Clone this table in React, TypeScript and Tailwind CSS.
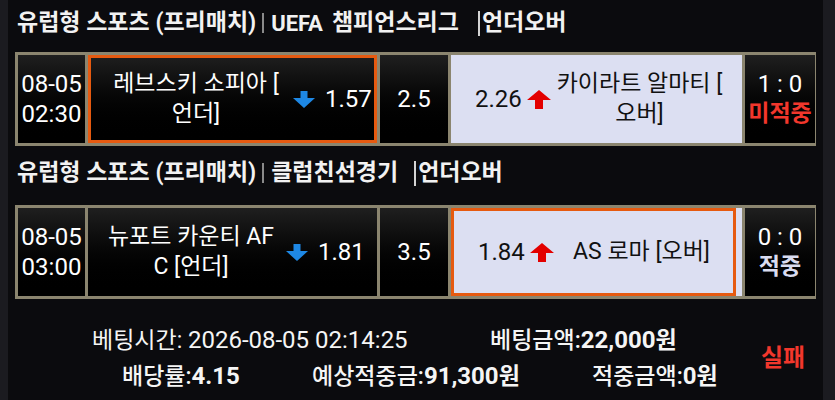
import clsx from 'clsx';

type Match = {
  date: string;
  time: string;
  home: [string, string?];
  homeOdds: string;
  line: string;
  away: [string, string?];
  awayOdds: string;
  score: string;
  result: string;
  resultColor: string;
  pick: 'home' | 'away';
};

const matches: { league: string; match: Match }[] = [
  {
    league: '챔피언스리그',
    match: {
      date: '08-05',
      time: '02:30',
      home: ['레브스키 소피아 [', '언더]'],
      homeOdds: '1.57',
      line: '2.5',
      away: ['카이라트 알마티 [', '오버]'],
      awayOdds: '2.26',
      score: '1 : 0',
      result: '미적중',
      resultColor: 'text-[#f2372c]',
      pick: 'home',
    },
  },
  {
    league: '클럽친선경기',
    match: {
      date: '08-05',
      time: '03:00',
      home: ['뉴포트 카운티 AF', 'C [언더]'],
      homeOdds: '1.81',
      line: '3.5',
      away: ['AS 로마 [오버]'],
      awayOdds: '1.84',
      score: '0 : 0',
      result: '적중',
      resultColor: 'text-[#d9dcf0]',
      pick: 'away',
    },
  },
];

function DownArrow() {
  return (
    <svg width="22" height="17" viewBox="0 0 22 17" className="shrink-0">
      <path d="M7.5 0h7v7H22L11 17 0 7h7.5z" fill="#1e88e5" />
    </svg>
  );
}

function UpArrow() {
  return (
    <svg width="24" height="19" viewBox="0 0 24 19" className="shrink-0">
      <path d="M12 0l12 10h-8v9H8v-9H0z" fill="#e30000" />
    </svg>
  );
}

function Title({ league, uefa }: { league: string; uefa?: boolean }) {
  return (
    <div className="flex h-[28px] items-center pl-[9px] text-[23px] font-bold text-[#f2f2f2]">
      <span>유럽형 스포츠 (프리매치)</span>
      <span className="mr-[7px] ml-[6px] h-[20px] w-[2px] bg-[#8a8a8a]" />
      {uefa && <span className="mr-[9px] text-[22px]">UEFA</span>}
      <span>{league}</span>
      <span className={clsx('mr-[2px] h-[25px] w-[2px] bg-[#d4d4d4]', uefa ? 'ml-[19px]' : 'ml-[16px]')} />
      <span>언더오버</span>
    </div>
  );
}

const dark = 'bg-linear-to-b from-[#1f1f1f] to-black text-white';

function MatchTable({ m }: { m: Match }) {
  const homePicked = m.pick === 'home';
  const awayPicked = m.pick === 'away';
  return (
    <div className="mx-[7px] grid grid-cols-[67px_289px_68px_291px_70px] gap-[3px] bg-[#8b856f] p-[3px]">
      <div className={clsx(dark, 'flex h-[88px] flex-col items-center justify-center text-[24px] leading-[30px]')}>
        <span>{m.date}</span>
        <span>{m.time}</span>
      </div>

      <div className={clsx(dark, 'flex h-[88px]')}>
        <div
          className={clsx(
            'flex flex-1 items-center pl-[14px]',
            homePicked ? 'border-[3px] border-[#e65a10] pr-[2px]' : 'pr-[12px]',
          )}
        >
          <div className="flex-1 text-center text-[23px] leading-[30px]">
            <div>{m.home[0]}</div>
            {m.home[1] && <div>{m.home[1]}</div>}
          </div>
          <span className="ml-[6px]">
            <DownArrow />
          </span>
          <span className="ml-[10px] w-[47px] text-[24px]">{m.homeOdds}</span>
        </div>
      </div>

      <div className={clsx(dark, 'flex h-[88px] items-center justify-center text-[24px]')}>{m.line}</div>

      <div className="flex h-[88px] bg-[#dcdff2] text-[#111]">
        <div
          className={clsx(
            'flex flex-1 items-center pl-[24px]',
            awayPicked ? 'mr-[6px] border-[3px] border-[#e65a10] pr-[4px]' : 'pr-[14px]',
          )}
        >
          <span className="w-[47px] text-[24px]">{m.awayOdds}</span>
          <span className="ml-[5px]">
            <UpArrow />
          </span>
          <div className="flex-1 text-center text-[23px] leading-[30px]">
            <div>{m.away[0]}</div>
            {m.away[1] && <div>{m.away[1]}</div>}
          </div>
        </div>
      </div>

      <div className={clsx(dark, 'flex h-[88px] flex-col items-center justify-center')}>
        <span className="text-[24px] leading-[30px]">{m.score}</span>
        <span className={clsx('text-[23px] font-bold leading-[30px]', m.resultColor)}>{m.result}</span>
      </div>
    </div>
  );
}

export default function App() {
  return (
    <div className="h-[400px] w-[835px] overflow-hidden bg-[#1b1b20] pr-[12px] pl-[8px] font-[Roboto,'Noto_Sans_CJK_KR',sans-serif]">
      <div className="h-full bg-[#0b0b0e] pt-[9px]">
        <Title league={matches[0].league} uefa />
        <div className="mt-[15px]">
          <MatchTable m={matches[0].match} />
        </div>
        <div className="mt-[13px]">
          <Title league={matches[1].league} />
        </div>
        <div className="mt-[18px]">
          <MatchTable m={matches[1].match} />
        </div>

        <div className="mt-[23px] flex text-[#f5f5f5]">
          <div className="flex-1">
            <div className="flex h-[36px] items-center pl-[84px]">
              <div className="w-[398px]">
                <span className="text-[23px]">베팅시간: </span>
                <span className="text-[24px]">2026-08-05 02:14:25</span>
              </div>
              <div>
                <span className="text-[23px] font-medium">베팅금액:</span>
                <span className="text-[24px] font-bold">22,000</span>
                <span className="text-[23px] font-bold">원</span>
              </div>
            </div>
            <div className="flex h-[36px] items-center pl-[114px]">
              <div className="w-[190px]">
                <span className="text-[23px] font-medium">배당률:</span>
                <span className="text-[24px] font-bold">4.15</span>
              </div>
              <div className="w-[280px]">
                <span className="text-[23px] font-medium">예상적중금:</span>
                <span className="text-[24px] font-bold">91,300</span>
                <span className="text-[23px] font-bold">원</span>
              </div>
              <div>
                <span className="text-[23px] font-medium">적중금액:</span>
                <span className="text-[24px] font-bold">0</span>
                <span className="text-[23px] font-bold">원</span>
              </div>
            </div>
          </div>
          <div className="flex w-[80px] items-center justify-center text-[24px] font-bold text-[#f2372c]">실패</div>
        </div>
      </div>
    </div>
  );
}
